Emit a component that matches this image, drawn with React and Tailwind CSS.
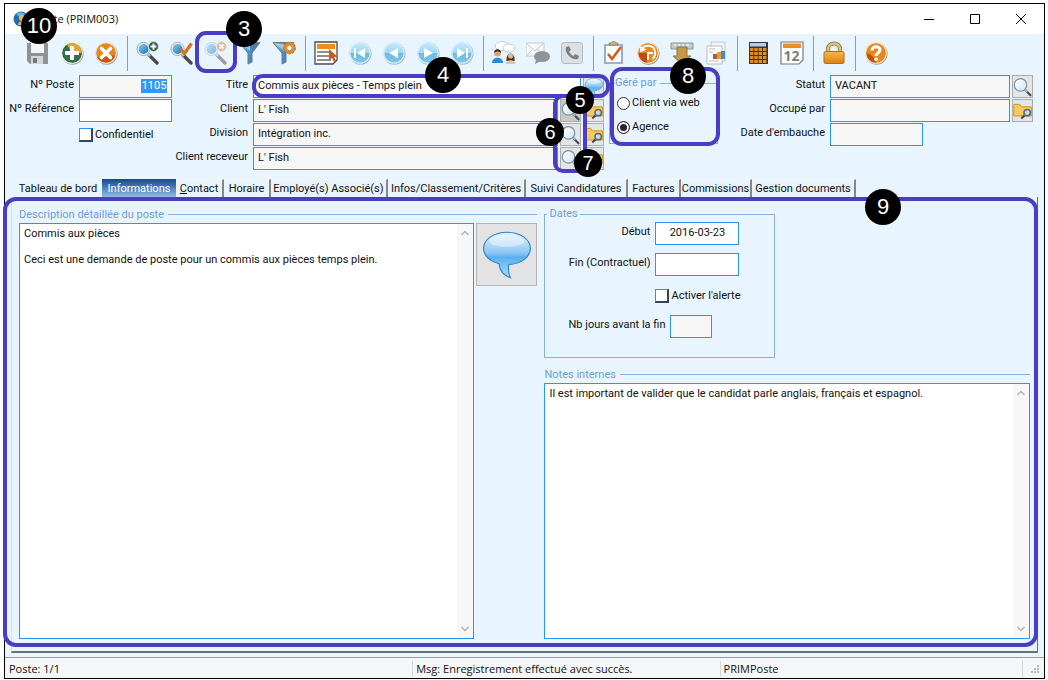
import React from "react";

function Svg({ children, size = "size-6" }) {
  return (
    <svg viewBox="0 0 24 24" className={`${size} block shrink-0`} aria-hidden="true">
      {children}
    </svg>
  );
}

function Defs() {
  return (
    <svg className="absolute size-0" aria-hidden="true">
      <defs>
        <linearGradient id="blue" x1="0" y1="0" x2="0" y2="1">
          <stop offset="0" stopColor="#bfe6fa" />
          <stop offset="0.5" stopColor="#a3d8f4" />
          <stop offset="0.5" stopColor="#6fbbe0" />
          <stop offset="1" stopColor="#7cc6ea" />
        </linearGradient>
        <linearGradient id="lens" x1="0" y1="0" x2="1" y2="1">
          <stop offset="0" stopColor="#8fd0f0" />
          <stop offset="1" stopColor="#1672b4" />
        </linearGradient>
        <linearGradient id="glass" x1="0" y1="0" x2="1" y2="1">
          <stop offset="0" stopColor="#ffffff" />
          <stop offset="1" stopColor="#cfe6f7" />
        </linearGradient>
        <linearGradient id="funnel" x1="0" y1="0" x2="1" y2="0">
          <stop offset="0" stopColor="#8fcdf0" />
          <stop offset="0.5" stopColor="#3d8fc8" />
          <stop offset="1" stopColor="#5f6b75" />
        </linearGradient>
        <linearGradient id="bubble" x1="0" y1="0" x2="0" y2="1">
          <stop offset="0" stopColor="#e4f3fd" />
          <stop offset="0.45" stopColor="#8cc8f4" />
          <stop offset="0.55" stopColor="#5aaef0" />
          <stop offset="1" stopColor="#a6e0fb" />
        </linearGradient>
        <linearGradient id="gold" x1="0" y1="0" x2="0" y2="1">
          <stop offset="0" stopColor="#f8b84e" />
          <stop offset="1" stopColor="#d9820f" />
        </linearGradient>
      </defs>
    </svg>
  );
}

const SaveIcon = () => (
  <Svg>
    <path d="M1 2h21v21H4l-3-3z" fill="#8f9193" />
    <path d="M5 2h13v10H5z" fill="#f3f4f5" />
    <path d="M5 15h12v8H5z" fill="#d3d5d7" />
    <path d="M7 17h4v5H7z" fill="#75787b" />
  </Svg>
);
const AddIcon = () => (
  <Svg>
    <circle cx="12.6" cy="12.8" r="11" fill="#9aa3a8" />
    <circle cx="12" cy="12" r="10.8" fill="#f4f1e6" />
    <circle cx="12" cy="12" r="9.8" fill="#2f6e4f" />
    <path d="M7 3.500A9.800 9.800 0 0 1 21.800 12H12z" fill="#e3a62f" />
    <path d="M12 12h9.800A9.800 9.800 0 0 1 12 21.800z" fill="#3d6b4b" />
    <path d="M10 5h4v5h5v4h-5v5h-4v-5H5v-4h5z" fill="#fff" />
  </Svg>
);
const CancelIcon = () => (
  <Svg>
    <circle cx="12.600" cy="12.800" r="11" fill="#9aa3a8" />
    <circle cx="12" cy="12" r="10.800" fill="#f4e7d6" />
    <circle cx="12" cy="12" r="9.800" fill="#e8861c" />
    <path d="M3 16a9.800 9.800 0 0 0 18-1c-5-2-12 3-18 1z" fill="#c25a12" />
    <path d="M7.500 7.500l9 9M16.500 7.500l-9 9" stroke="#fff" strokeWidth="3.600" strokeLinecap="round" />
  </Svg>
);
function Magnifier({ children }) {
  return (
    <Svg>
      <path d="M13 14l8 8" stroke="#4a4a4a" strokeWidth="3.400" strokeLinecap="round" />
      <path d="M11 12l3 3" stroke="#b8bcc0" strokeWidth="2.500" />
      <circle cx="7.500" cy="8" r="6.600" fill="#eef3f6" stroke="#a7b0b6" strokeWidth="1" />
      <circle cx="7.500" cy="8" r="5" fill="url(#lens)" />
      {children}
    </Svg>
  );
}
const FindAddIcon = () => (
  <Magnifier>
    <circle cx="17.500" cy="5.500" r="5" fill="#2f5d47" stroke="#d9e2dc" />
    <path d="M17.500 2.500v6M14.500 5.500h6" stroke="#fff" strokeWidth="2" />
  </Magnifier>
);
const FindCheckIcon = () => (
  <Magnifier>
    <path d="M10.500 8l4 4.500 7-10" fill="none" stroke="#d4701a" strokeWidth="3.200" />
  </Magnifier>
);
const FindCancelIcon = () => (
  <span className="block opacity-50">
    <Magnifier>
      <circle cx="17.500" cy="5.500" r="5" fill="#d7853e" stroke="#f3dcc8" />
      <path d="M15.500 3.500l4 4M19.500 3.500l-4 4" stroke="#fff" strokeWidth="1.800" />
    </Magnifier>
  </span>
);
const FunnelShape = () => (
  <>
    <path d="M1 1.500h21L14 12v9l-4 2V12z" fill="url(#funnel)" stroke="#6d7a84" strokeWidth="1" />
    <path d="M4 3h8v7z" fill="#b9e1f6" opacity="0.7" />
  </>
);
const FunnelIcon = () => (
  <Svg>
    <FunnelShape />
  </Svg>
);
const FunnelGearIcon = () => (
  <Svg>
    <FunnelShape />
    <circle cx="17.500" cy="7" r="4.600" fill="#fff" stroke="#d98a2b" strokeWidth="3" />
    <circle cx="17.500" cy="7" r="5.900" fill="none" stroke="#c4741d" strokeWidth="1" strokeDasharray="2.500 1.500" />
    <circle cx="17.500" cy="7" r="2.800" fill="#f7f2ea" stroke="#a96a20" strokeWidth="0.800" />
  </Svg>
);
const ListIcon = () => (
  <Svg>
    <path d="M1 1h22v18l-4 4H1z" fill="#fff" stroke="#4c4c4c" strokeWidth="1.300" />
    <path d="M3 3h18v5H3z" fill="#ee8f1d" />
    <path d="M3 11h12M3 15h12M3 19h14" stroke="#6a6a6a" strokeWidth="1.600" />
    <path d="M15 8v11l3-2 2 4 2-1-2-4h4z" fill="#c75b20" />
  </Svg>
);
function NavIcon({ d }) {
  return (
    <Svg>
      <circle cx="12.500" cy="12.600" r="11" fill="#9eb2bd" />
      <circle cx="12" cy="12" r="10.800" fill="#d9eef8" />
      <circle cx="12" cy="12" r="9.600" fill="url(#blue)" />
      <path d={d} fill="#fff" />
    </Svg>
  );
}
const FirstIcon = () => <NavIcon d="M6 7h2v10H6zM17 7v10l-8-5z" />;
const PrevIcon = () => <NavIcon d="M16 7v10l-9-5z" />;
const NextIcon = () => <NavIcon d="M8 7v10l9-5z" />;
const LastIcon = () => <NavIcon d="M16 7h2v10h-2zM7 7v10l8-5z" />;
const PeopleIcon = () => (
  <Svg>
    <ellipse cx="10" cy="5" rx="7" ry="4.500" fill="#fff" stroke="#b9bfc4" strokeWidth="0.800" />
    <ellipse cx="17" cy="7" rx="6" ry="4" fill="#fff" stroke="#b9bfc4" strokeWidth="0.800" />
    <circle cx="5.500" cy="12" r="3.500" fill="#d9a479" />
    <path d="M2 12c0-5 7-5 7 0-2-2-5-2-7 0z" fill="#3a2a20" />
    <path d="M0 22c0-7 11-7 11 0z" fill="#2b8ad8" />
    <path d="M14.500 20c-1-10 9-10 8 0z" fill="#4a2f22" />
    <circle cx="18.500" cy="15" r="2.600" fill="#e8b78e" />
    <path d="M13.500 23c0-5 10-5 10 0z" fill="#dcc6ac" />
  </Svg>
);
const MailIcon = () => (
  <Svg>
    <path d="M0 2h18v13H0z" fill="#f7f8f9" stroke="#c6cacd" />
    <path d="M0 2l9 8 9-8M0 15l7-7M18 15l-7-7" fill="none" stroke="#c6cacd" />
    <ellipse cx="16" cy="15.500" rx="8" ry="5.500" fill="#8f9498" />
    <path d="M10 18l-1 5 6-3z" fill="#8f9498" />
  </Svg>
);
const PhoneIcon = () => (
  <Svg>
    <rect x="1.500" y="1.500" width="21" height="21" rx="3" fill="#dde0e2" stroke="#b4b9bd" />
    <path d="M6 6l3-1 2 4-2 1.500c1 2 2.500 3.500 4.500 4.500l1.500-2 4 2-1 3c-6 2-14-6-12-12z" fill="#7b8084" />
  </Svg>
);
const ClipboardIcon = () => (
  <Svg>
    <path d="M3 4h17v18H3z" fill="#fdfdff" stroke="#7f9cc4" strokeWidth="1.600" />
    <path d="M7 4h9V2h-2c-1-2-4-2-5 0H7z" fill="#cdb57c" stroke="#8d7a4c" strokeWidth="0.800" />
    <path d="M6 13l4 5 9-12" fill="none" stroke="#cf5d1d" strokeWidth="2.600" />
  </Svg>
);
const ClockIcon = () => (
  <Svg>
    <circle cx="12.600" cy="12.800" r="11" fill="#9a9a98" />
    <circle cx="12" cy="12" r="10.800" fill="#f6e3c9" />
    <circle cx="12" cy="12" r="9.800" fill="#e8881c" />
    <path d="M2.500 12a9.500 9.500 0 0 0 8.500 9.700V12z" fill="#b9500f" />
    <path d="M5.500 8.500a7.500 7.500 0 0 1 13 0c1.500 3.500.5 7-2 9.500M12 19v-8M12 12h5" fill="none" stroke="#fff" strokeWidth="1.800" />
    <path d="M3.500 5l1 6.500 6-3z" fill="#fff" />
  </Svg>
);
const DownloadIcon = () => (
  <Svg>
    <path d="M1 2h22v6H1z" fill="#c5c9cc" stroke="#8d9194" />
    <path d="M4 4h2M8 4h2M12 4h2M16 4h3" stroke="#fff" />
    <path d="M7 6h10v9h4l-9 8-9-8h4z" fill="#c49a45" stroke="#7b7a4c" strokeWidth="1" />
  </Svg>
);
const ReportIcon = () => (
  <Svg>
    <path d="M7 1h14v19H7z" fill="#f1f2f3" stroke="#c5c8ca" />
    <path d="M3 5h15v18H3z" fill="#fcfcfc" stroke="#b8bbbd" />
    <path d="M5 8h6M5 11h4M5 20h10" stroke="#b9bcbe" />
    <path d="M9 13h4v5H9z" fill="#b55b2a" />
    <path d="M13 11h4v7h-4z" fill="#ee9a2c" />
    <path d="M17 10h4v8h-4z" fill="#3d8ed0" />
  </Svg>
);
const CalculatorIcon = () => (
  <Svg>
    <path d="M3 1h19v22H3z" fill="#3b3532" />
    <path d="M4 2h16v3.500H4z" fill="#a9d3ea" />
    <path d="M4 7h3.400v3H4zM8.300 7h3.400v3h-3.400zM12.600 7h3.400v3h-3.400zM17 7h3.400v3h-3.400zM4 11h3.400v3H4zM8.300 11h3.400v3h-3.400zM12.600 11h3.400v3h-3.400zM17 11h3.400v3h-3.400zM4 15h3.400v3H4zM8.300 15h3.400v3h-3.400zM12.600 15h3.400v3h-3.400zM17 15h3.400v3h-3.400zM4 19h3.400v3H4zM8.300 19h3.400v3h-3.400zM12.600 19h3.400v3h-3.400zM17 19h3.400v3h-3.400z" fill="#e68a24" />
  </Svg>
);
const CalendarIcon = () => (
  <Svg>
    <path d="M1 1h22v18l-4 4H1z" fill="#fff" stroke="#77797b" strokeWidth="1.200" />
    <path d="M3 2.500h18V7H3z" fill="#ee8f1d" />
    <text x="11.500" y="19.500" textAnchor="middle" fontFamily="'Open Sans', sans-serif" fontWeight="700" fontSize="14" fill="#7a7d80">
      12
    </text>
  </Svg>
);
const LockIcon = () => (
  <Svg>
    <path d="M6 12V8a6 5.500 0 0 1 12 0v4" fill="none" stroke="#8d7a45" strokeWidth="4.200" />
    <path d="M6 12V8a6 5.500 0 0 1 12 0v4" fill="none" stroke="#d8c27c" strokeWidth="2.600" />
    <rect x="2" y="10.500" width="20" height="12" rx="1.500" fill="url(#gold)" stroke="#b36d14" />
  </Svg>
);
const HelpIcon = () => (
  <Svg>
    <circle cx="12.600" cy="12.800" r="11" fill="#a5a29c" />
    <circle cx="12" cy="12" r="10.800" fill="#f6e3c9" />
    <circle cx="12" cy="12" r="9.800" fill="#e8881c" />
    <path d="M2.500 12a9.500 9.500 0 0 0 9.500 9.800c-1-5-4-8-9.500-9.800z" fill="#bd5412" />
    <path d="M8 9.500c0-5 8-5 8-.5 0 3-4 3-4 6" fill="none" stroke="#fff" strokeWidth="3" />
    <circle cx="12" cy="18.300" r="1.800" fill="#fff" />
  </Svg>
);
const LoupeIcon = () => (
  <Svg size="size-5">
    <path d="M15 16l6 6" stroke="#4a4a4a" strokeWidth="2.600" strokeLinecap="round" />
    <path d="M14 15l3 3" stroke="#b9bdc1" strokeWidth="2" />
    <circle cx="9" cy="9.500" r="7.500" fill="url(#glass)" stroke="#7c8fa3" strokeWidth="1.400" />
  </Svg>
);
const FolderIcon = () => (
  <Svg size="size-5">
    <path d="M1 4h7l2 3h12v11H1z" fill="#f5cb5c" stroke="#cf9420" strokeWidth="1.200" />
    <path d="M14 17l-4 4" stroke="#4a4a4a" strokeWidth="2.600" />
    <circle cx="17" cy="14" r="3.800" fill="#b9dcf0" stroke="#5d6870" strokeWidth="1.800" />
  </Svg>
);
const BubbleIcon = ({ size }) => (
  <Svg size={size}>
    <path d="M12 1.500c6 0 10.800 3.200 10.800 7.500 0 4-4.500 7.200-10 7.400-.3 2.300 0 4.600.8 6.100-3.200-1-5-3.500-5.300-6.500C4 15 1.200 12.300 1.200 9c0-4.300 4.800-7.500 10.800-7.500z" fill="url(#bubble)" stroke="#2d7fc0" strokeWidth="0.500" />
    <ellipse cx="12" cy="5.500" rx="8" ry="2.800" fill="#fff" opacity="0.4" />
  </Svg>
);

function Callout({ n, place, small }) {
  const size = small ? "size-7 text-[20px] leading-[28px]" : "size-9 text-[22px] leading-[36px]";
  return (
    <span className={`absolute z-20 rounded-full bg-black text-center font-['Liberation_Sans',Arial,sans-serif] text-white ${size} ${place}`}>
      {n}
    </span>
  );
}

function Outline({ place }) {
  return <span className={`pointer-events-none absolute z-10 border-4 border-[#4a3dc4] ${place}`} />;
}

function Sep() {
  return <span className="ml-1 mr-[3px] h-[35px] w-px bg-[#9a9a9a]" />;
}

const toolbar = [
  [["Enregistrer", SaveIcon, 10], ["Ajouter", AddIcon], ["Annuler", CancelIcon]],
  [["Nouvelle recherche", FindAddIcon], ["Lancer la recherche", FindCheckIcon], ["Annuler la recherche", FindCancelIcon, 3], ["Filtrer", FunnelIcon], ["Options de filtre", FunnelGearIcon]],
  [["Liste", ListIcon], ["Premier", FirstIcon], ["Précédent", PrevIcon], ["Suivant", NextIcon], ["Dernier", LastIcon]],
  [["Discussion", PeopleIcon], ["Courriel", MailIcon], ["Appel", PhoneIcon]],
  [["Tâches", ClipboardIcon], ["Historique", ClockIcon], ["Importer", DownloadIcon], ["Rapports", ReportIcon]],
  [["Calculatrice", CalculatorIcon], ["Calendrier", CalendarIcon]],
  [["Verrouiller", LockIcon]],
  [["Aide", HelpIcon]],
];

function Toolbar() {
  return (
    <div role="toolbar" className="flex h-[38px] items-center pl-4">
      {toolbar.map((group, i) => (
        <React.Fragment key={i}>
          {i > 0 && <Sep />}
          {group.map(([label, Icon, n]) => (
            <div key={label} className="relative">
              <button type="button" aria-label={label} className="flex h-9 w-[34px] items-center justify-center">
                <Icon />
              </button>
              {n === 10 && <Callout n={10} place="-top-[27px] left-0" />}
              {n === 3 && (
                <>
                  <Outline place="-inset-x-1 -bottom-0.5 -top-1 rounded-[11px]" />
                  <Callout n={3} place="-top-6 left-[27px]" />
                </>
              )}
            </div>
          ))}
        </React.Fragment>
      ))}
    </div>
  );
}

const field = "h-[23px] min-w-0 border border-[#2b95f3] px-1 pb-0.5 outline-none";
const label = "shrink-0 whitespace-nowrap text-right leading-[20px]";

function IconButton({ name, children, dim }) {
  return (
    <button
      type="button"
      aria-label={name}
      className={`flex h-[23px] w-[21px] shrink-0 items-center justify-center border border-[#a9adb0] ${dim ? "bg-[#c9c9c9]" : "bg-[#e4e5e6]"}`}
    >
      {children}
    </button>
  );
}

function Field({ id, text, value = "", labelWidth, width = "flex-1", bg = "bg-[#f6f6f6]", align = "", children }) {
  return (
    <div className="flex items-start">
      <label htmlFor={id} className={`${label} mr-[5px] ${labelWidth}`}>
        {text}
      </label>
      <input id={id} defaultValue={value} className={`${field} ${width} ${bg} ${align}`} />
      {children}
    </div>
  );
}

function CheckBox({ id, text }) {
  return (
    <div className="flex h-[23px] items-center gap-0.5">
      <input id={id} type="checkbox" className="size-[14px] appearance-none border border-b-2 border-r-2 border-[#2b95f3] border-b-[#33445c] border-r-[#33445c] bg-white" />
      <label htmlFor={id}>{text}</label>
    </div>
  );
}

function Radio({ id, text, checked }) {
  return (
    <div className="flex h-6 items-center gap-0.5">
      <input
        id={id}
        name="gere"
        type="radio"
        defaultChecked={checked}
        className="size-[13px] shrink-0 appearance-none rounded-full border border-[#333] bg-white checked:bg-[#33202c] checked:shadow-[inset_0_0_0_2px_#fff]"
      />
      <label htmlFor={id} className="whitespace-nowrap">{text}</label>
    </div>
  );
}

function Heading({ id, children }) {
  return (
    <div className="flex h-[17px] items-center gap-1">
      <label htmlFor={id} className="text-[#6a9fd8]">{children}</label>
      <span className="h-px flex-1 bg-[#86b1e2]" />
    </div>
  );
}

function Memo({ id, value }) {
  return (
    <div className="relative flex min-w-0 flex-1">
      <textarea
        id={id}
        defaultValue={value}
        className="min-h-[200px] w-full flex-1 resize-none overflow-hidden border border-[#2b95f3] bg-white py-[3px] pl-1 pr-5 leading-[13px] outline-none"
      />
      <div className="pointer-events-none absolute inset-y-px right-px flex w-4 flex-col items-center justify-between bg-[#f7f7f7] py-1.5 text-[#b4b4b4]">
        <svg viewBox="0 0 8 6" className="h-1.5 w-2">
          <path d="M0.500 5L4 1.500 7.500 5" fill="none" stroke="currentColor" strokeWidth="1.500" />
        </svg>
        <svg viewBox="0 0 8 6" className="h-1.5 w-2">
          <path d="M0.500 1L4 4.500 7.500 1" fill="none" stroke="currentColor" strokeWidth="1.500" />
        </svg>
      </div>
    </div>
  );
}

const tabs = [
  ["Tableau de bord", "w-[88px]"],
  ["Informations", "w-[74px]"],
  ["Contact", "w-12"],
  ["Horaire", "w-[47px]"],
  ["Employé(s) Associé(s)", "w-[117px]"],
  ["Infos/Classement/Critères", "w-[138px]"],
  ["Suivi Candidatures", "w-[102px]"],
  ["Factures", "w-[53px]"],
  ["Commissions", "w-[71px]"],
  ["Gestion documents", "w-[104px]"],
];

function Tabs() {
  return (
    <div role="tablist" className="mt-[9px] flex h-[18px] pl-[9px]">
      {tabs.map(([name, width], i) => (
        <button
          key={name}
          type="button"
          role="tab"
          aria-selected={i === 1}
          className={`flex shrink-0 items-center justify-center whitespace-nowrap border-t ${width} ${
            i === 1
              ? "border-[#1f4a94] bg-linear-to-b from-[#1f4a94] to-[#8fbdea] text-white"
              : `border-[#f3f3f3] ${i === 0 ? "" : "border-r-2 border-r-[#8a8580]"}`
          }`}
        >
          {name === "Contact" ? (
            <span>
              <span className="underline">C</span>ontact
            </span>
          ) : (
            name
          )}
        </button>
      ))}
    </div>
  );
}

function TitleBar() {
  return (
    <header className="flex h-[30px] items-center bg-white pl-2 font-['Open_Sans','Noto_Sans',sans-serif]">
      <svg viewBox="0 0 16 16" className="mr-1.5 size-4" aria-hidden="true">
        <circle cx="8" cy="8" r="7.500" fill="#1f6fae" />
        <path d="M3 3a7 7 0 0 1 9 0L8 8z" fill="#63b3e4" />
        <circle cx="9" cy="7" r="3" fill="#f0b545" />
        <path d="M5 14c0-5 8-5 8 0z" fill="#f0b545" />
      </svg>
      <h1 className="flex-1">Poste (PRIM003)</h1>
      {[
        ["Réduire", "M0 5.500h10"],
        ["Agrandir", "M0.500 0.500h9v9h-9z"],
        ["Fermer", "M0 0l10 10M10 0L0 10"],
      ].map(([name, d]) => (
        <button key={name} type="button" aria-label={name} className="flex h-full w-[46px] items-center justify-center">
          <svg viewBox="0 0 10 10" className="size-2.5 overflow-visible">
            <path d={d} fill="none" stroke="#000" />
          </svg>
        </button>
      ))}
    </header>
  );
}

function StatusBar() {
  return (
    <footer className="mt-1 flex h-[21px] items-center border-t border-[#9a9a9a] bg-[#f5f6f7] pt-0.5 font-['Open_Sans','Noto_Sans',sans-serif]">
      <span className="flex-[408] pl-1">Poste: 1/1</span>
      <span className="flex-[307] border-l border-[#d6d6d6] pl-[3px]">Msg: Enregistrement effectué avec succès.</span>
      <span className="flex-[302] border-l border-[#d6d6d6] pl-[3px]">PRIMPoste</span>
      <span className="flex h-full w-[22px] items-end justify-end border-l border-[#d6d6d6] p-1">
        <svg viewBox="0 0 9 9" className="size-[9px]" aria-hidden="true">
          <path d="M6 0h2v2H6zM3 3h2v2H3zM6 3h2v2H6zM0 6h2v2H0zM3 6h2v2H3zM6 6h2v2H6z" fill="#b9b9b9" />
        </svg>
      </span>
    </footer>
  );
}

export default function App() {
  return (
    <div className="flex min-h-screen flex-col bg-white pb-px pl-1 pr-[3px] pt-[3px] font-['Roboto','Open_Sans',sans-serif] text-[11px] leading-[16px] text-[#111]">
      <Defs />
      <div className="flex flex-1 flex-col border border-black bg-[#e8f5ff]">
        <TitleBar />
        <Toolbar />
        <form className="flex pt-[3px]" onSubmit={(e) => e.preventDefault()}>
          <div className="flex shrink-0 flex-col gap-px">
            <div className="flex items-start">
              <label htmlFor="poste" className={`${label} mr-[5px] w-[69px]`}>Nº Poste</label>
              <div className={`${field} flex w-[93px] items-center justify-end bg-[#f6f6f6]`}>
                <input id="poste" defaultValue="1105" className="h-3.5 w-[26px] bg-[#3597f8] text-center text-white outline-none" />
              </div>
            </div>
            <Field id="reference" text="Nº Référence" labelWidth="w-[69px]" width="w-[93px]" bg="bg-white" />
            <div className="pl-[74px]">
              <CheckBox id="confidentiel" text="Confidentiel" />
            </div>
          </div>

          <div className="relative flex min-w-0 flex-1 flex-col gap-px">
            <Field id="titre" text="Titre" value="Commis aux pièces - Temps plein" labelWidth="w-[76px]" bg="bg-white">
              <span className="ml-0.5 mr-px flex">
                <IconButton name="Commentaire du titre">
                  <BubbleIcon size="size-5" />
                </IconButton>
              </span>
            </Field>
            {[
              ["client", "Client", "L' Fish"],
              ["division", "Division", "Intégration inc."],
              ["receveur", "Client receveur", "L' Fish"],
            ].map(([id, text, value]) => (
              <Field key={id} id={id} text={text} value={value} labelWidth="w-[76px]">
                <span className="ml-0.5 mr-px flex gap-0.5">
                  <IconButton name={`Rechercher ${text}`} dim={id === "client"}>
                    <LoupeIcon />
                  </IconButton>
                  <IconButton name={`Ouvrir ${text}`}>
                    <FolderIcon />
                  </IconButton>
                </span>
              </Field>
            ))}
            <Outline place="-right-[5px] -top-px left-20 h-6 rounded-[11px]" />
            <Outline place="right-[18px] top-[19px] h-[79px] w-[34px] rounded-[10px]" />
            <Callout n={4} place="-top-[18px] left-[253px]" />
            <Callout n={5} small place="right-[11px] top-[11px]" />
            <Callout n={6} small place="right-[41px] top-[43px]" />
            <Callout n={7} small place="right-[3px] top-[74px]" />
          </div>

          <div className="relative ml-1 w-[109px] shrink-0">
            <fieldset className="h-[69px] border border-[#86b1e2] pl-[7px]">
              <legend className="-ml-0.5 pr-1 text-[#6a9fd8]">Géré par</legend>
              <Radio id="web" text="Client via web" />
              <Radio id="agence" text="Agence" checked />
            </fieldset>
            <Outline place="-right-0.5 -top-2 left-px h-[79px] rounded-xl" />
            <Callout n={8} place="-top-[17px] left-[61px]" />
          </div>

          <div className="flex shrink-0 flex-col gap-px pr-[11px]">
            <Field id="statut" text="Statut" value="VACANT" labelWidth="w-[107px]" width="w-[180px]">
              <span className="ml-0.5">
                <IconButton name="Rechercher le statut">
                  <LoupeIcon />
                </IconButton>
              </span>
            </Field>
            <Field id="occupe" text="Occupé par" labelWidth="w-[107px]" width="w-[180px]">
              <span className="ml-0.5">
                <IconButton name="Ouvrir le dossier">
                  <FolderIcon />
                </IconButton>
              </span>
            </Field>
            <Field id="embauche" text="Date d'embauche" labelWidth="w-[107px]" width="w-[93px]" />
          </div>
        </form>

        <Tabs />

        <main className="relative mx-1.5 grid flex-1 grid-cols-[519fr_486fr] gap-[7px] border-b-2 border-l border-r border-[#6f6f6f] border-l-[#d9dee2] pb-3 pl-[7px] pr-[7px] pt-[9px]">
          <section className="flex min-w-0 flex-col">
            <Heading id="description">Description détaillée du poste</Heading>
            <div className="flex flex-1 items-stretch gap-0.5">
              <Memo id="description" value={"Commis aux pièces\n\nCeci est une demande de poste pour un commis aux pièces temps plein."} />
              <button type="button" aria-label="Commenter" className="flex h-[63px] w-[61px] shrink-0 items-center justify-center border border-[#b3b3b3] bg-[#e3e3e3]">
                <BubbleIcon size="size-[52px]" />
              </button>
            </div>
          </section>

          <section className="flex min-w-0 flex-col">
            <fieldset className="mb-2 flex h-[152px] w-[231px] flex-col border border-[#86b1e2]">
              <legend className="ml-0.5 px-0.5 text-[#6a9fd8]">Dates</legend>
              <div className="flex flex-col gap-2">
                <Field id="debut" text="Début" value="2016-03-23" labelWidth="w-[105px]" width="w-[84px]" bg="bg-white" align="text-center" />
                <Field id="fin" text="Fin (Contractuel)" labelWidth="w-[105px]" width="w-[84px]" bg="bg-white" />
                <div className="pl-[110px]">
                  <CheckBox id="alerte" text="Activer l'alerte" />
                </div>
                <Field id="jours" text="Nb jours avant la fin" labelWidth="w-[120px]" width="w-[42px]" />
              </div>
            </fieldset>
            <Heading id="notes">Notes internes</Heading>
            <Memo id="notes" value="Il est important de valider que le candidat parle anglais, français et espagnol." />
          </section>

          <Outline place="-left-[9px] -right-px bottom-1 top-0 rounded-[13px]" />
          <Callout n={9} place="-top-2 right-[136px]" />
        </main>

        <StatusBar />
      </div>
    </div>
  );
}
